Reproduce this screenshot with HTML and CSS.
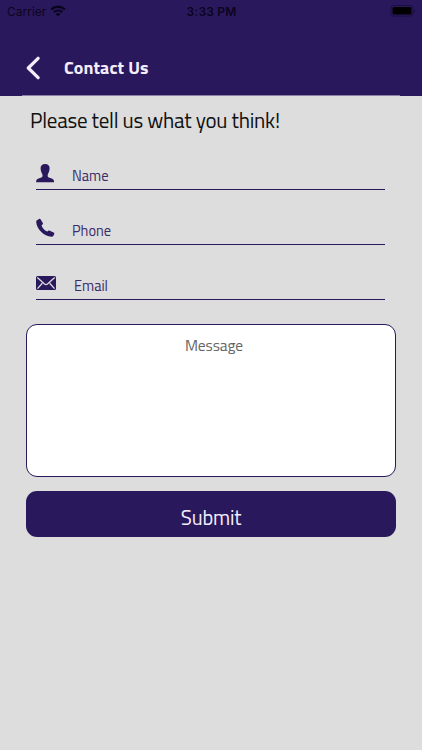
FILE: index.html
```html
<!DOCTYPE html>
<html lang="en">
<head>
  <meta charset="UTF-8" />
  <meta name="viewport" content="width=device-width, initial-scale=1.0"/>
  <title>Contact Us</title>
  <link rel="stylesheet" href="styles.css">
</head>
<body>

  <header>
    <div class="status-bar">
      <div class="status-left">
        <span class="carrier">Carrier</span>
        <svg class="wifi" viewBox="0 0 16 12" width="16" height="12">
          <path d="M1.2 4.5a9.8 9.8 0 0 1 13.6 0" fill="none" stroke="#08041c" stroke-width="2.3"/>
          <path d="M3.7 7.2a6.2 6.2 0 0 1 8.6 0" fill="none" stroke="#08041c" stroke-width="2.1"/>
          <path d="M8 11.6 5.5 9.1a3.6 3.6 0 0 1 5 0z" fill="#08041c"/>
        </svg>
      </div>
      <span class="time">3:33 PM</span>
      <svg class="battery" viewBox="0 0 26 12" width="26" height="12">
        <rect x="1" y=".5" width="22" height="10.6" rx="3" fill="none" stroke="#1a0e43"/>
        <rect x="2.5" y="2" width="19" height="7.6" rx="1.6" fill="#000"/>
        <path d="M24.3 4v4c1.3-.7 1.3-3.3 0-4z" fill="#1a0e43"/>
      </svg>
    </div>
    <div class="nav-bar">
      <a href="#" class="back" aria-label="Back">
        <svg viewBox="0 0 14 24" width="14" height="24">
          <path d="M12.1 2.3 2.3 12l9.8 9.7" fill="none" stroke="#f3edfc" stroke-width="3.2" stroke-linecap="round" stroke-linejoin="round"/>
        </svg>
      </a>
      <h1>Contact Us</h1>
    </div>
  </header>

  <main>
    <h2>Please tell us what you think!</h2>
    <form>
      <div class="field">
        <svg class="icon" viewBox="0 0 20 20" width="20" height="20">
          <path d="M9.1.9C6.2.9 4.5 2.5 4.6 5.3c.1 2.2.6 4 1.5 5.5.6 1.1.7 2.800-.2 3.400L2 15.800C.7 16.400.1 17.400.1 19.200h18c0-1.800-.6-2.800-1.900-3.400l-3.900-1.600c-.9-.6-.8-2.300-.2-3.400.9-1.500 1.400-3.300 1.500-5.500C13.700 2.500 12 .9 9.100.9z"/>
        </svg>
        <input class="name" type="text" placeholder="Name">
      </div>
      <div class="field">
        <svg class="icon" viewBox="0 0 20 20" width="20" height="20">
          <path d="M1 2.300 3 1C3.700.6 4.300.8 4.700 1.500L6.800 5c.4.7.2 1.300-.5 1.700L5.500 7.300c.8 2.600 2.900 5.200 5.700 6.300l.9-.6c.5-.5 1.100-.6 1.700-.2l3.800 1.700c.7.4.9 1 .6 1.700l-1 1.900c-.4.600-.9.800-1.500.7C7.700 18.200.5 11 .2 3.700.2 3.100.5 2.600 1 2.300z"/>
        </svg>
        <input class="phone" type="tel" placeholder="Phone">
      </div>
      <div class="field">
        <svg class="icon" viewBox="0 0 20 20" width="20" height="20">
          <rect x="0" y="3" width="20" height="14" rx="1.5"/>
          <path d="M1.3 4.6 8.5 11c1 .8 2 .8 3 0l7.2-6.4M1.5 15.6 6.3 10.3M18.5 15.6 13.7 10.3" fill="none" stroke="#ddd" stroke-width="1.3"/>
        </svg>
        <input class="email" type="email" placeholder="Email">
      </div>
      <textarea placeholder="Message"></textarea>
      <button type="button">Submit</button>
    </form>
  </main>

</body>
</html>
```
FILE: styles.css
```css
* {
  margin: 0;
  padding: 0;
  box-sizing: border-box;
}

body {
  font-family: 'Titillium Web', Roboto, sans-serif;
  background-color: #ddd;
  color: #111;
}

header {
  height: 96px;
  background-color: #2a185c;
}

.status-bar {
  height: 22px;
  padding: 0 6px 0 7px;
  display: grid;
  grid-template-columns: 1fr auto 1fr;
  align-items: center;
  font-family: Inter, sans-serif;
  font-size: 12px;
  color: #0a0520;
}

.status-left {
  display: flex;
  align-items: center;
  gap: 4px;
}

.time {
  font-weight: 600;
  letter-spacing: 0.2px;
}

.battery {
  justify-self: end;
}

.nav-bar {
  height: 74px;
  margin: 0 22px;
  padding: 18px 4px 0;
  display: flex;
  align-items: center;
  gap: 24px;
  border-bottom: 1px solid #8b82a5;
}

.back {
  display: flex;
}

h1 {
  font-size: 18px;
  line-height: 24px;
  font-weight: 700;
  letter-spacing: 0.1px;
  color: #f3edfc;
}

main {
  padding: 9px 26px 0;
}

h2 {
  padding-left: 4px;
  font-size: 21px;
  line-height: 30px;
  font-weight: 400;
  letter-spacing: -0.26px;
}

form {
  display: flex;
  flex-direction: column;
}

.field {
  height: 55px;
  margin: 0 11px 0 10px;
  padding-bottom: 4px;
  display: flex;
  align-items: flex-end;
  gap: 16px;
  border-bottom: 1px solid #2a185c;
}

.icon {
  flex: none;
  margin-bottom: 2px;
  fill: #2a185c;
}

input {
  width: 100%;
  height: 18px;
  border: none;
  outline: none;
  background: none;
  font-family: inherit;
  font-size: 14.5px;
  color: #2a185c;
}

input.email {
  padding-left: 2px;
}

input::placeholder {
  color: #3b2b69;
}

textarea {
  height: 153px;
  margin-top: 24px;
  padding: 10px 0 0 6px;
  border: 1px solid #2a185c;
  border-radius: 11px;
  outline: none;
  resize: none;
  background-color: #fff;
  font-family: inherit;
  font-size: 15.5px;
  line-height: 20px;
  letter-spacing: -0.1px;
  text-align: center;
}

textarea::placeholder {
  color: #666;
}

button {
  height: 46px;
  margin-top: 14px;
  padding-top: 6px;
  border: none;
  border-radius: 11px;
  background-color: #2a185c;
  font-family: inherit;
  font-size: 20.5px;
  letter-spacing: -0.2px;
  color: #f3edfc;
}
```
